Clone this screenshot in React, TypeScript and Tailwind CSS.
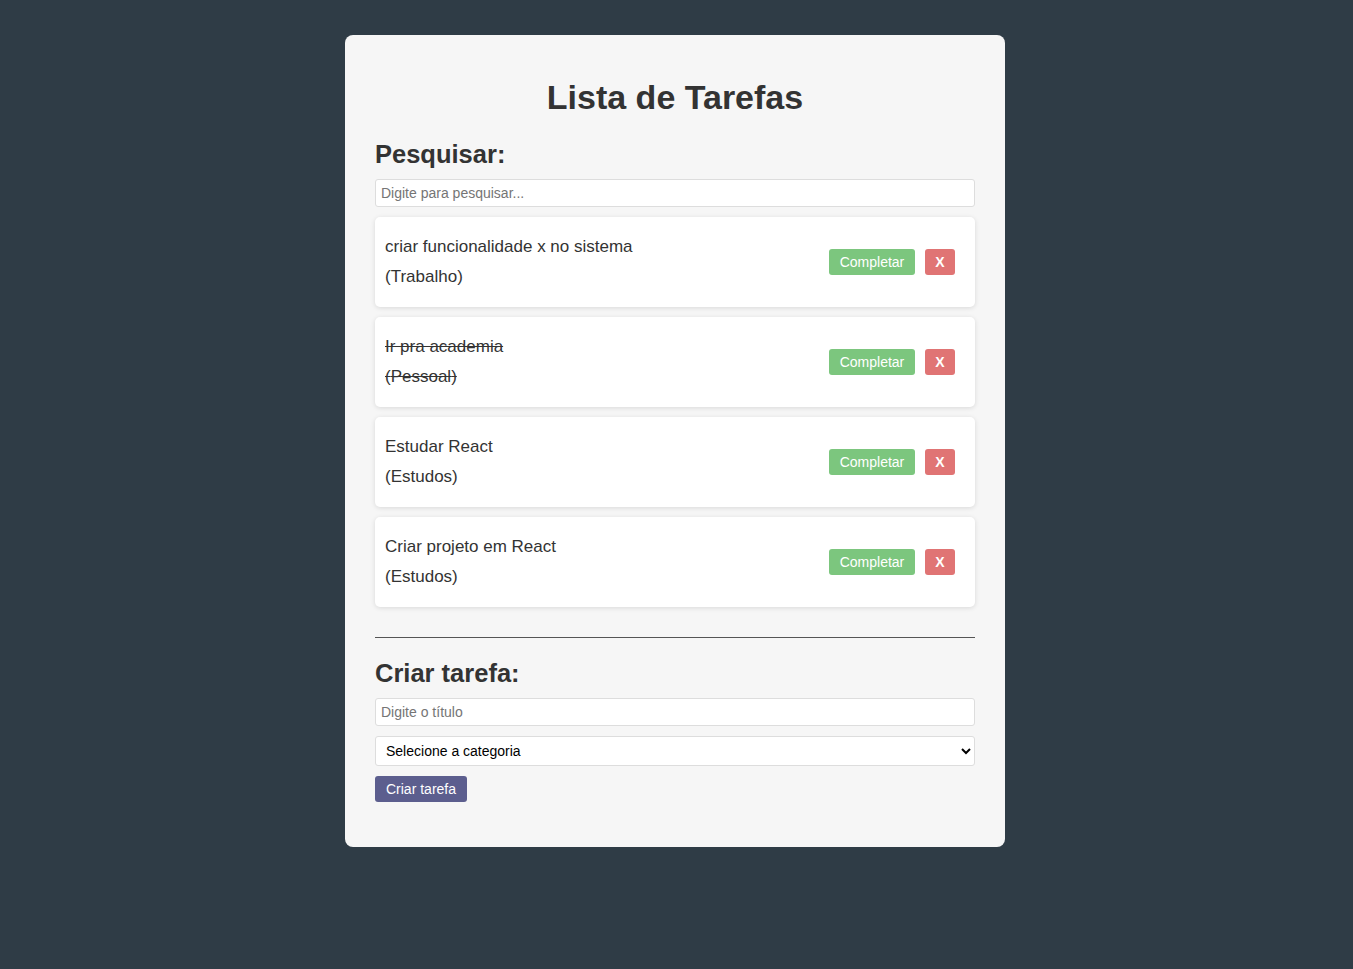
import React, { useState } from "react";

type Tarefa = { id: number; texto: string; categoria: string; completa: boolean };

export default function App() {
  const [busca, setBusca] = useState("");
  const [titulo, setTitulo] = useState("");
  const [categoria, setCategoria] = useState("");

  const tarefas: Tarefa[] = [
    { id: 1, texto: "criar funcionalidade x no sistema", categoria: "Trabalho", completa: false },
    { id: 2, texto: "Ir pra academia", categoria: "Pessoal", completa: true },
    { id: 3, texto: "Estudar React", categoria: "Estudos", completa: false },
    { id: 4, texto: "Criar projeto em React", categoria: "Estudos", completa: false },
  ];

  return (
    <div className="min-h-screen bg-[#2f3c46] pt-[35px] pb-10 pr-[3px] font-['Liberation_Sans',Arial,sans-serif] text-[#333]">
      <div className="w-[660px] mx-auto bg-[#f6f6f6] rounded-[8px] px-[30px] pt-[43px] pb-[45px]">
        <h1 className="text-[34px] leading-[38px] font-bold text-center">Lista de Tarefas</h1>

        <h2 className="mt-[23px] text-[25.5px] leading-[30px] font-bold">Pesquisar:</h2>
        <input
          type="text"
          value={busca}
          onChange={(e) => setBusca(e.target.value)}
          placeholder="Digite para pesquisar..."
          className="mt-[10px] w-full h-[28px] bg-white border border-[#ddd] rounded-[3px] px-[5px] text-[14px] outline-none placeholder:text-[#757575]"
        />

        <div className="mt-[10px] flex flex-col gap-[10px]">
          {tarefas
            .filter((t) => t.texto.toLowerCase().includes(busca.toLowerCase()))
            .map((t) => (
              <div
                key={t.id}
                className="h-[90px] bg-white rounded-[5px] shadow-[0_1px_5px_rgba(0,0,0,0.12)] pl-[10px] pr-[20px] flex items-center justify-between"
              >
                <div className={`text-[17px] leading-[30px] ${t.completa ? "line-through" : ""}`}>
                  <p>{t.texto}</p>
                  <p>({t.categoria})</p>
                </div>
                <div className="flex items-center gap-[10px]">
                  <button className="h-[26px] w-[86px] bg-[#7cc67e] text-white text-[14px] rounded-[3px]">Completar</button>
                  <button className="h-[26px] w-[30px] bg-[#e07474] text-white text-[14px] font-bold rounded-[3px]">X</button>
                </div>
              </div>
            ))}
        </div>

        <hr className="mt-[30px] border-t border-[#555]" />

        <h2 className="mt-[20px] text-[25.5px] leading-[30px] font-bold">Criar tarefa:</h2>
        <input
          type="text"
          value={titulo}
          onChange={(e) => setTitulo(e.target.value)}
          placeholder="Digite o título"
          className="mt-[10px] w-full h-[28px] bg-white border border-[#ddd] rounded-[3px] px-[5px] text-[14px] outline-none placeholder:text-[#757575]"
        />
        <select
          value={categoria}
          onChange={(e) => setCategoria(e.target.value)}
          className="mt-[10px] block w-full h-[30px] bg-white border border-[#ddd] rounded-[3px] px-[6px] text-[14px] text-black"
        >
          <option value="">Selecione a categoria</option>
          <option value="Trabalho">Trabalho</option>
          <option value="Pessoal">Pessoal</option>
          <option value="Estudos">Estudos</option>
        </select>
        <button className="mt-[10px] block h-[26px] w-[92px] bg-[#5c5e8e] text-white text-[14px] rounded-[3px]">Criar tarefa</button>
      </div>
    </div>
  );
}
